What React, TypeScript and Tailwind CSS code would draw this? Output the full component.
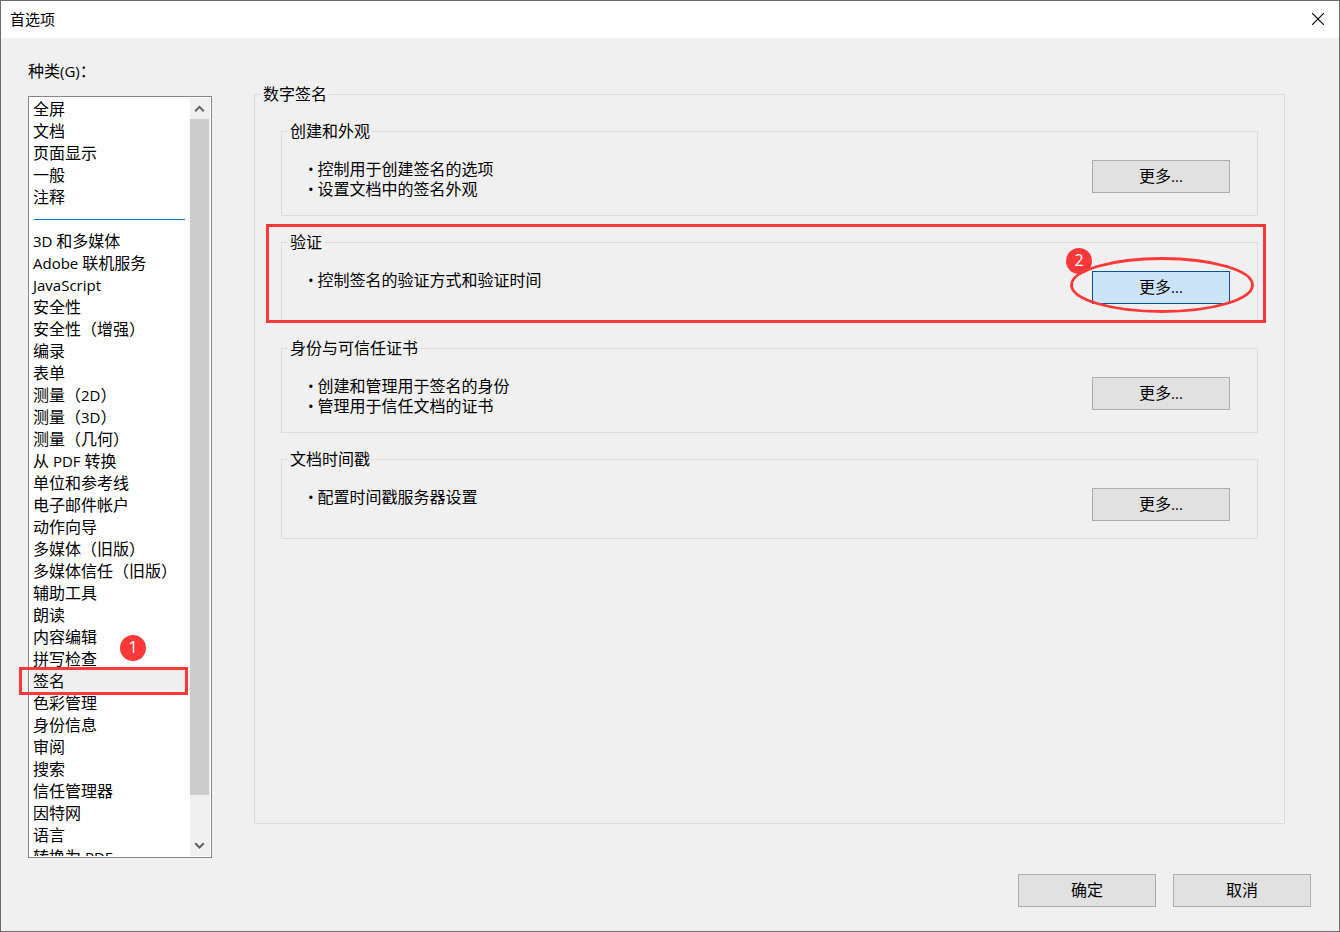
import { useState } from "react";
import clsx from "clsx";

const generalItems = ["全屏", "文档", "页面显示", "一般", "注释"];

const categoryItems = [
  "3D 和多媒体",
  "Adobe 联机服务",
  "JavaScript",
  "安全性",
  "安全性（增强）",
  "编录",
  "表单",
  "测量（2D）",
  "测量（3D）",
  "测量（几何）",
  "从 PDF 转换",
  "单位和参考线",
  "电子邮件帐户",
  "动作向导",
  "多媒体（旧版）",
  "多媒体信任（旧版）",
  "辅助工具",
  "朗读",
  "内容编辑",
  "拼写检查",
  "签名",
  "色彩管理",
  "身份信息",
  "审阅",
  "搜索",
  "信任管理器",
  "因特网",
  "语言",
  "转换为 PDF",
];

const groups = [
  { title: "创建和外观", lines: ["控制用于创建签名的选项", "设置文档中的签名外观"] },
  { title: "验证", lines: ["控制签名的验证方式和验证时间"], marked: true },
  { title: "身份与可信任证书", lines: ["创建和管理用于签名的身份", "管理用于信任文档的证书"] },
  { title: "文档时间戳", lines: ["配置时间戳服务器设置"] },
];

// latin runs are set in a slightly smaller face than the hanzi around them
function Mixed({ text }: { text: string }) {
  return (
    <>
      {text.split(/([\x20-\x7e•]+)/).map((part, i) =>
        i % 2 ? (
          <span key={i} className="font-['Open_Sans',sans-serif] text-[15px] leading-none">
            {part}
          </span>
        ) : (
          part
        )
      )}
    </>
  );
}

function DialogButton({ label, active }: { label: string; active?: boolean }) {
  return (
    <button
      type="button"
      className={clsx(
        "h-[33px] w-[138px] border pb-1 text-center leading-5",
        active ? "border-[#00549a] bg-[#cce4f7]" : "border-[#adadad] bg-[#e1e1e1]"
      )}
    >
      <Mixed text={label} />
    </button>
  );
}

function Badge({ n, className }: { n: number; className: string }) {
  return (
    <span
      className={clsx(
        "pointer-events-none absolute h-[26px] w-[26px] rounded-full bg-[#fc3838] text-center font-['Open_Sans',sans-serif] text-base leading-6 text-white",
        className
      )}
    >
      {n}
    </span>
  );
}

function ScrollArrow({ up }: { up?: boolean }) {
  return (
    <button
      type="button"
      aria-label={up ? "向上滚动" : "向下滚动"}
      className="mr-px grid h-[21px] shrink-0 place-items-center"
    >
      <svg viewBox="0 0 11 8" className="h-2 w-[11px]" fill="none" stroke="#606060" strokeWidth="2" aria-hidden="true">
        <path d={up ? "M1.200 6.200 5.500 1.900l4.300 4.300" : "M1.200 1.200 5.500 5.500l4.300-4.300"} />
      </svg>
    </button>
  );
}

function CategoryList() {
  const [selected, setSelected] = useState("签名");

  const renderItem = (item: string) => (
    <li key={item} className="h-[22px]">
      <button
        type="button"
        aria-pressed={item === selected}
        onClick={() => setSelected(item)}
        className={clsx(
          "block h-[22px] w-full whitespace-pre pb-[2px] pl-[3px] text-left leading-5",
          item === selected && "bg-[#efefef]"
        )}
      >
        <Mixed text={item} />
      </button>
    </li>
  );

  return (
    <div className="relative flex min-h-0 flex-1 border border-[#828790] bg-white py-px pl-px">
      <ul aria-labelledby="category-label" className="min-w-0 flex-1 overflow-hidden">
        {generalItems.map(renderItem)}
        <li aria-hidden="true" className="flex h-[22px] items-center pl-1 pr-[5px]">
          <span className="h-px w-full bg-[#0078d7]" />
        </li>
        {categoryItems.map(renderItem)}
      </ul>
      <div className="mr-px flex w-5 flex-col bg-[#f0f0f0]">
        <ScrollArrow up />
        <div className="flex min-h-0 flex-1 flex-col">
          <div className="mr-px h-[94.4%] bg-[#cdcdcd]" />
        </div>
        <ScrollArrow />
      </div>

      <div className="pointer-events-none absolute -left-[10px] top-[570px] h-7 w-[169px] border-[3px] border-[#fc3838]" />
      <Badge n={1} className="left-[91px] top-[538px]" />
    </div>
  );
}

function Group({ title, lines, marked }: { title: string; lines: string[]; marked?: boolean }) {
  return (
    <div className="relative">
      <fieldset className="border border-[#dcdcdc]">
        <legend className="ml-[6px] h-[21px] px-[2px] leading-[19px]">{title}</legend>
        <div className="flex items-start justify-between pb-[17px] pl-[26px] pr-[27px] pt-4">
          <ul className="leading-5">
            {lines.map((line) => (
              <li key={line} className="h-5">
                <Mixed text={`• ${line}`} />
              </li>
            ))}
          </ul>
          <div className="relative mt-[2px]">
            <DialogButton label="更多..." active={marked} />
            {marked && (
              <>
                <svg
                  viewBox="0 0 184 56"
                  className="pointer-events-none absolute -left-[22px] -top-[14px] h-14 w-[184px] max-w-none"
                  fill="none"
                  stroke="#fc3838"
                  strokeWidth="2.8"
                  aria-hidden="true"
                >
                  <ellipse cx="92" cy="28" rx="90.500" ry="26.500" />
                </svg>
                <Badge n={2} className="-left-[26px] -top-[23px]" />
              </>
            )}
          </div>
        </div>
      </fieldset>
      {marked && (
        <div className="pointer-events-none absolute -bottom-px -left-[15px] -right-2 -top-2 border-[3px] border-[#fc3838]" />
      )}
    </div>
  );
}

export default function App() {
  return (
    <div className="flex h-screen flex-col border border-[#6b6b6b] bg-[#f0f0f0] font-['Noto_Sans_CJK_SC',sans-serif] text-base text-black">
      <header className="flex h-[37px] shrink-0 items-center justify-between bg-white pb-[2px] pl-[9px] pr-[15px]">
        <h1 className="text-[15px] leading-5">首选项</h1>
        <button type="button" aria-label="关闭">
          <svg viewBox="0 0 12 12" className="h-3 w-3" stroke="#000" strokeWidth="1.1" aria-hidden="true">
            <path d="M0 0l12 12M12 0L0 12" />
          </svg>
        </button>
      </header>

      <main className="flex min-h-0 flex-1 gap-[42px] pl-[27px] pr-[54px]">
        <section className="flex w-[184px] shrink-0 flex-col pt-[22px]">
          <h2 id="category-label" className="mb-4 h-5 leading-5">
            <Mixed text="种类(G)：" />
          </h2>
          <CategoryList />
        </section>

        <fieldset className="mb-[34px] mt-[46px] min-w-0 flex-1 border border-[#dcdcdc]">
          <legend className="ml-[6px] h-[21px] px-[2px] leading-[19px]">数字签名</legend>
          <div className="flex flex-col gap-4 px-[26px] pt-4">
            {groups.map((g) => (
              <Group key={g.title} {...g} />
            ))}
          </div>
        </fieldset>
      </main>

      <footer className="flex justify-end gap-[17px] pb-6 pr-7 pt-4">
        <DialogButton label="确定" />
        <DialogButton label="取消" />
      </footer>
    </div>
  );
}
